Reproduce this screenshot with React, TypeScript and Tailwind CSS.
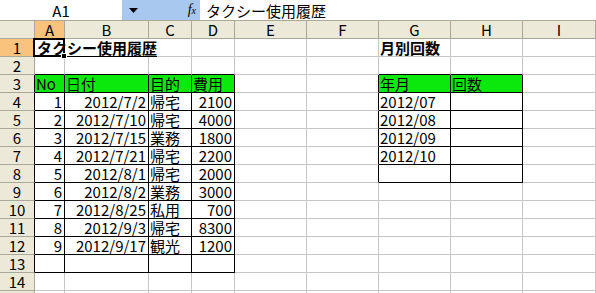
import React from "react";

type Cell = { v: string; align?: "l" | "r" | "c"; bold?: boolean };

const colWidths = "grid-cols-[35px_30px_84px_43px_43px_72px_72px_72px_72px_73px]";
const letters = ["A", "B", "C", "D", "E", "F", "G", "H", "I"];

const trips: [string, string, string, string][] = [
  ["1", "2012/7/2", "帰宅", "2100"],
  ["2", "2012/7/10", "帰宅", "4000"],
  ["3", "2012/7/15", "業務", "1800"],
  ["4", "2012/7/21", "帰宅", "2200"],
  ["5", "2012/8/1", "帰宅", "2000"],
  ["6", "2012/8/2", "業務", "3000"],
  ["7", "2012/8/25", "私用", "700"],
  ["8", "2012/9/3", "帰宅", "8300"],
  ["9", "2012/9/17", "観光", "1200"],
];
const months = ["2012/07", "2012/08", "2012/09", "2012/10"];

// sheet[row][col], col 1 = A
function buildSheet() {
  const sheet: Record<number, Record<number, Cell>> = {};
  const put = (r: number, c: number, cell: Cell) => {
    sheet[r] = sheet[r] || {};
    sheet[r][c] = cell;
  };
  put(1, 7, { v: "月別回数", bold: true });
  put(3, 1, { v: "No" });
  put(3, 2, { v: "日付" });
  put(3, 3, { v: "目的" });
  put(3, 4, { v: "費用" });
  put(3, 7, { v: "年月" });
  put(3, 8, { v: "回数" });
  trips.forEach((t, i) => {
    put(4 + i, 1, { v: t[0], align: "r" });
    put(4 + i, 2, { v: t[1], align: "r" });
    put(4 + i, 3, { v: t[2] });
    put(4 + i, 4, { v: t[3], align: "r" });
  });
  months.forEach((m, i) => put(4 + i, 7, { v: m }));
  return sheet;
}

const inTable = (r: number, c: number) =>
  (r >= 3 && r <= 13 && c >= 1 && c <= 4) || (r >= 3 && r <= 8 && c >= 7 && c <= 8);
const isGreen = (r: number, c: number) => r === 3 && inTable(r, c);

function FormulaBar() {
  return (
    <div className="flex h-[21px] border-b border-[#aca899] bg-white">
      <div className="flex w-[122px] items-center justify-center leading-none">A1</div>
      <div className="flex w-[78px] items-center justify-between bg-[#a9c8f0] pl-[7px] pr-[4px]">
        <svg width="9" height="5" viewBox="0 0 9 5">
          <polygon points="0,0 9,0 4.5,5" fill="#000" />
        </svg>
        <span className="font-['Liberation_Serif',serif] text-[14px] italic leading-none">
          f<span className="text-[10px]">x</span>
        </span>
      </div>
      <div className="flex flex-1 items-center pl-[6px] leading-none">タクシー使用履歴</div>
    </div>
  );
}

export default function App() {
  const sheet = buildSheet();
  const rows = Array.from({ length: 15 }, (_, i) => i + 1);

  return (
    <div className="h-[293px] w-[596px] overflow-hidden bg-white font-['Noto_Sans_CJK_JP',sans-serif] text-[15px] text-black">
      <FormulaBar />
      <div className={`grid ${colWidths} auto-rows-[18px]`}>
        <div className="border-b border-r border-[#aca899] bg-[#ece9d8]" />
        {letters.map((l, i) => (
          <div
            key={l}
            className={`flex items-center justify-center border-b border-r border-[#aca899] leading-none ${i === 0 ? "bg-[#f9c27d]" : "bg-[#ece9d8]"}`}
          >
            {l}
          </div>
        ))}

        {rows.map((r) => (
          <React.Fragment key={r}>
            <div
              className={`flex items-center justify-center border-b border-[#aca899] leading-none ${r === 1 ? "bg-[#f9c27d]" : "bg-[#ece9d8]"} ${inTable(r, 1) ? "border-r border-r-black" : "border-r"}`}
            >
              {r <= 14 ? r : ""}
            </div>
            {letters.map((_, ci) => {
              const c = ci + 1;
              const cell = sheet[r]?.[c];
              const rightBlack = inTable(r, c) || inTable(r, c + 1);
              const bottomBlack = inTable(r, c) || inTable(r + 1, c);
              const hideRight = r === 1 && (c === 1 || c === 2);
              const align =
                cell?.align === "r" ? "justify-end pr-[2px]" : cell?.align === "c" ? "justify-center" : "justify-start pl-[1px]";
              return (
                <div
                  key={c}
                  className={`relative flex items-center whitespace-nowrap leading-none ${align} ${isGreen(r, c) ? "bg-[#0be80b]" : "bg-white"} ${rightBlack ? "border-r border-r-black" : hideRight ? "border-r border-r-white" : "border-r border-r-[#c6c6c6]"} ${bottomBlack ? "border-b border-b-black" : "border-b border-b-[#c6c6c6]"}`}
                >
                  {r === 1 && c === 1 && (
                    <>
                      <div className="absolute -left-[2px] -top-[1px] h-[19px] w-[32px] border-2 border-black" />
                      <div className="absolute -bottom-[3px] -right-[3px] z-20 h-[6px] w-[6px] border border-white bg-black" />
                      <span className="relative z-10 pl-[1px] font-bold underline underline-offset-[2px]">
                        タクシー使用履歴
                      </span>
                    </>
                  )}
                  {cell && <span className={cell.bold ? "font-bold" : ""}>{cell.v}</span>}
                </div>
              );
            })}
          </React.Fragment>
        ))}
      </div>
    </div>
  );
}
